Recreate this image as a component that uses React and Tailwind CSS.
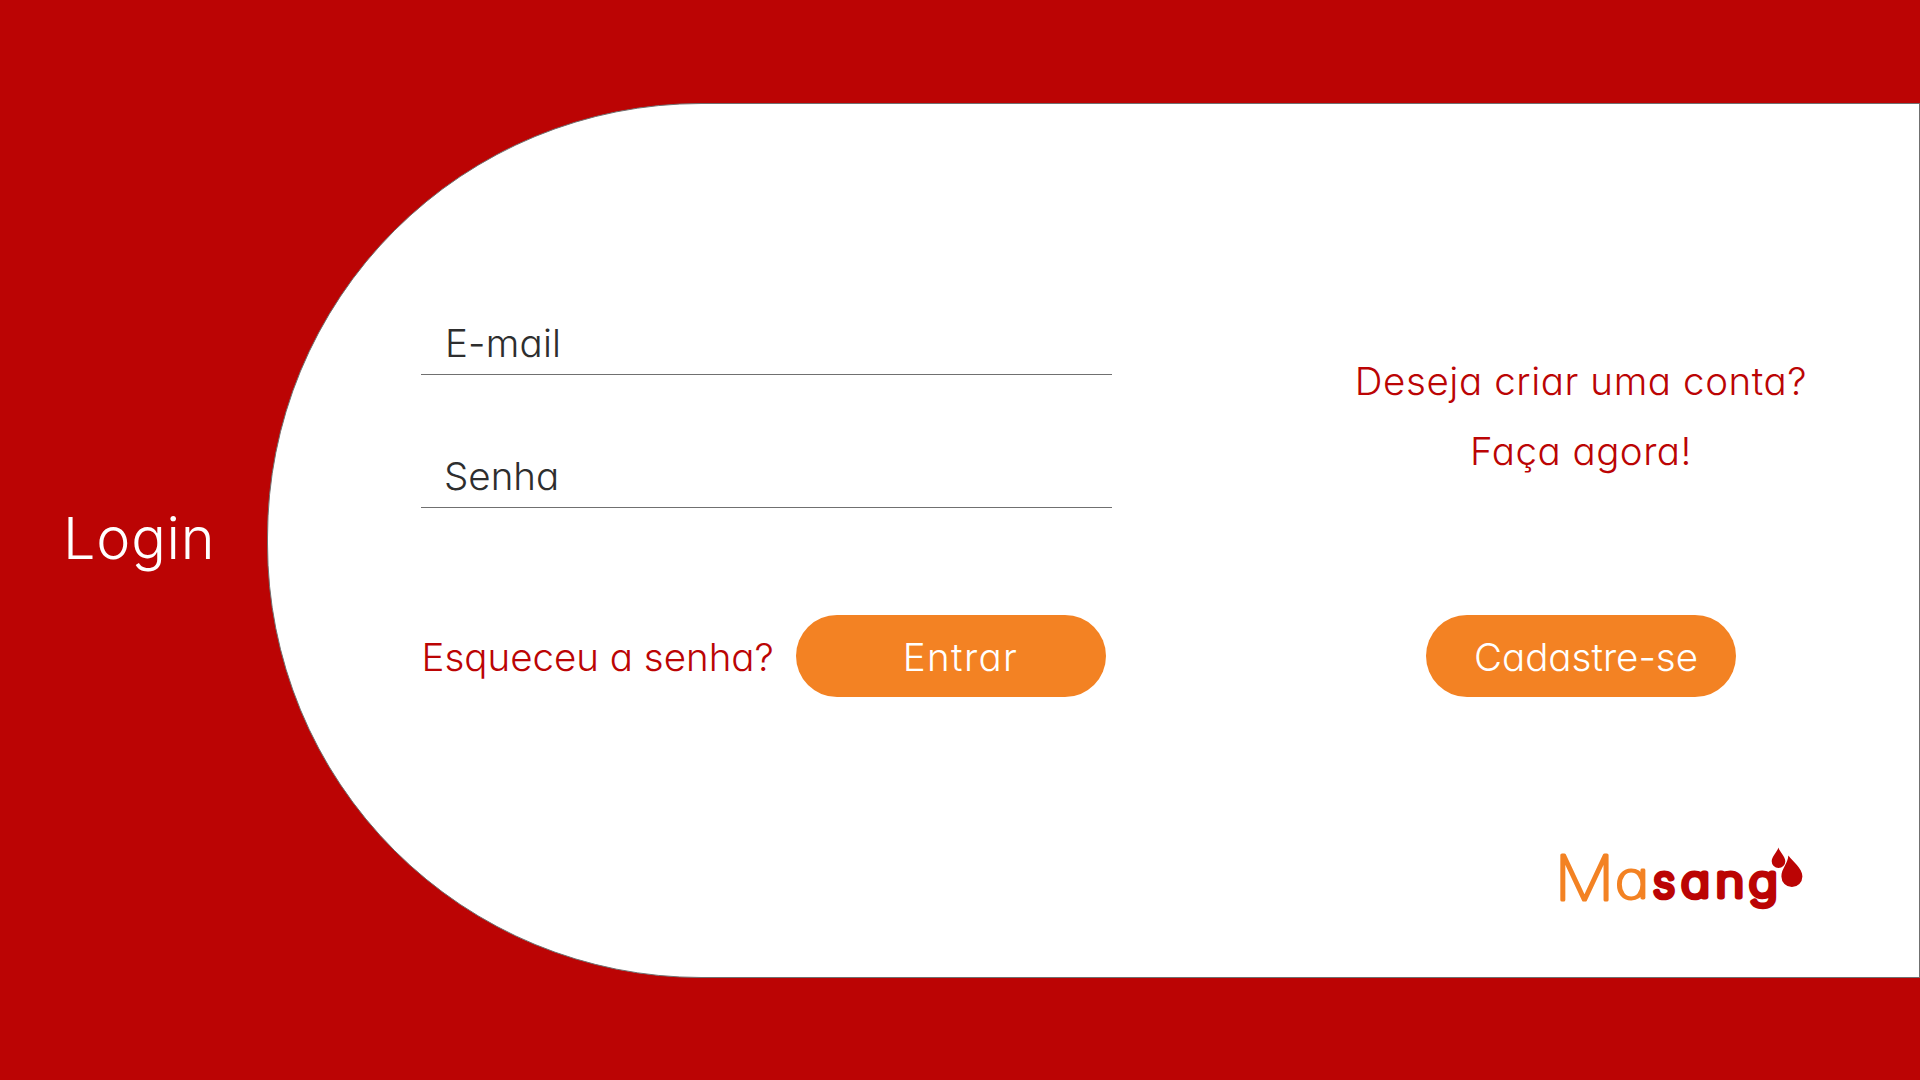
function Field({ label, className }) {
  return (
    <div>
      <div className={`h-[55px] text-[38.5px] leading-[48px] text-[#2e2e2e] ${className}`}>{label}</div>
      <div className="h-px bg-[#707070]" />
    </div>
  );
}

function PillButton({ children, className }) {
  return (
    <button
      type="button"
      className={`flex h-[82px] w-[310px] shrink-0 items-center justify-center rounded-full bg-[#f38223] pt-0.5 text-[38.5px] font-light leading-[48px] text-white ${className}`}
    >
      {children}
    </button>
  );
}

function Logo() {
  return (
    <svg
      className="font-['Inter',sans-serif] [font-feature-settings:'cv11']"
      width="267"
      height="100"
      viewBox="1539.4 830 267 100"
      strokeLinejoin="round"
      role="img"
      aria-label="Masang"
    >
      <g fill="#f38223" stroke="#f38223" fontWeight="100">
        <text transform="translate(1554.9 899.9) scale(1.08 1)" fontSize="62" strokeWidth="3.2">M</text>
        <text transform="translate(1615.3 898.1) scale(1.18 1)" fontSize="50" strokeWidth="3">a</text>
      </g>
      <g fill="#bb0404" stroke="#bb0404" strokeWidth="5.2" fontSize="43.5" fontWeight="200">
        <text x="1653.4" y="897.3">s</text>
        <text transform="translate(1681.4 897.3) scale(1.13 1)" x="0 30.6 59.9" strokeWidth="4.9">ang</text>
      </g>
      <g fill="#bb0404">
        <path d="M1778.8 847.5c1.2 4.4 6.9 8.8 6.9 13.8a6.8 6.8 0 0 1-13.6 0c0-5 5.6-9.4 6.7-13.8z" />
        <path d="M1788.8 855.5c4 5.8 14 12.5 14 21.1a10.5 10.5 0 0 1-21 0c0-8 6.3-12.6 7-21.1z" />
      </g>
    </svg>
  );
}

export default function App() {
  return (
    <div className="flex h-[1080px] w-[1920px] overflow-hidden bg-[#bb0404] font-['Inter',sans-serif] font-light [font-feature-settings:'cv11']">
      <aside className="w-[266.5px] shrink-0 pl-[63px] pt-[498px]">
        <h1 className="text-[57.5px] leading-[80px] tracking-[0.8px] text-white">Login</h1>
      </aside>

      <main className="mt-[102.5px] flex h-[875px] w-[1653.5px] shrink-0 rounded-l-[434px] border border-[#707070] bg-white pl-[153px]">
        <form className="w-[691px] shrink-0 pt-[215.5px]">
          <div className="flex flex-col gap-[77px]">
            <Field label="E-mail" className="pl-[24.5px] tracking-[0.2px]" />
            <Field label="Senha" className="pl-[23.5px]" />
          </div>
          <div className="mt-[107px] flex items-center justify-between pr-[6px]">
            <a className="whitespace-nowrap pl-px pt-0.5 text-[38.5px] leading-[48px] text-[#bb0404]">
              Esqueceu a senha?
            </a>
            <PillButton className="pl-5 tracking-[1.35px]">Entrar</PillButton>
          </div>
        </form>

        <section className="ml-[244.5px] flex w-[450px] shrink-0 flex-col items-center pt-[242.5px]">
          <p className="whitespace-nowrap text-center text-[38.5px] leading-[70px] text-[#bb0404]">
            <span className="tracking-[0.6px]">Deseja criar uma conta?</span>
            <br />
            <span className="tracking-[0.5px]">Faça agora!</span>
          </p>
          <PillButton className="mt-[129px] pl-[10px]">Cadastre-se</PillButton>
          <div className="mt-[133px] self-end">
            <Logo />
          </div>
        </section>
      </main>
    </div>
  );
}
